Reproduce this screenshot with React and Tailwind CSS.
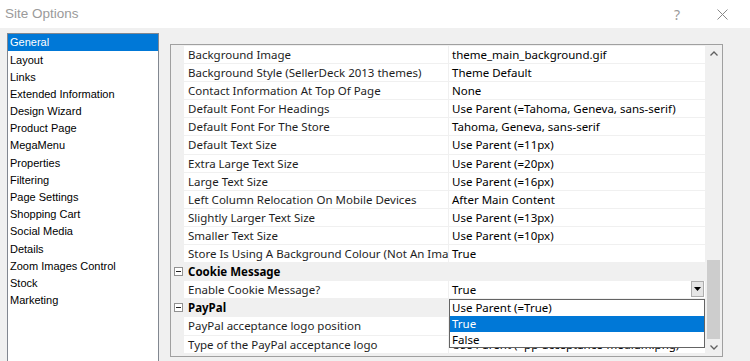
import React from "react";

const pages = [
  "General",
  "Layout",
  "Links",
  "Extended Information",
  "Design Wizard",
  "Product Page",
  "MegaMenu",
  "Properties",
  "Filtering",
  "Page Settings",
  "Shopping Cart",
  "Social Media",
  "Details",
  "Zoom Images Control",
  "Stock",
  "Marketing",
];

const rows = [
  ["Background Image", "theme_main_background.gif"],
  ["Background Style (SellerDeck 2013 themes)", "Theme Default"],
  ["Contact Information At Top Of Page", "None"],
  ["Default Font For Headings", "Use Parent (=Tahoma, Geneva, sans-serif)"],
  ["Default Font For The Store", "Tahoma, Geneva, sans-serif"],
  ["Default Text Size", "Use Parent (=11px)"],
  ["Extra Large Text Size", "Use Parent (=20px)"],
  ["Large Text Size", "Use Parent (=16px)"],
  ["Left Column Relocation On Mobile Devices", "After Main Content"],
  ["Slightly Larger Text Size", "Use Parent (=13px)"],
  ["Smaller Text Size", "Use Parent (=10px)"],
  ["Store Is Using A Background Colour (Not An Image)", "True"],
  { category: "Cookie Message" },
  ["Enable Cookie Message?", "True", "dropdown"],
  { category: "PayPal" },
  ["PayPal acceptance logo position", "Use Parent (=Right)"],
  ["Type of the PayPal acceptance logo", "Use Parent (=pp-acceptance-medium.png)"],
];

function MinusBox() {
  return (
    <svg width="9" height="9" viewBox="0 0 9 9">
      <rect x="0.5" y="0.5" width="8" height="8" fill="#fff" stroke="#919191" />
      <path d="M2 4.5h5" stroke="#222" />
    </svg>
  );
}

function GridRow({ row }) {
  if (row.category) {
    return (
      <div className="flex h-[17.1px] shrink-0 items-center bg-[#f0f0f0]">
        <div className="flex w-[13px] shrink-0 justify-center pl-[1px]">
          <MinusBox />
        </div>
        <div className="pl-[4px] font-bold text-black">{row.category}</div>
      </div>
    );
  }
  const [name, value, kind] = row;
  return (
    <div className="flex h-[17.1px] shrink-0 items-center">
      <div className="w-[13px] shrink-0 self-stretch bg-[#f0f0f0]" />
      <div className="h-full min-w-0 flex-1 overflow-hidden whitespace-nowrap bg-white pl-[4px] leading-[17px] text-[#1e1e1e]">
        {name}
      </div>
      <div className="relative ml-px h-full w-[256px] shrink-0 overflow-hidden whitespace-nowrap bg-white pl-[3px] leading-[17px] text-black">
        {value}
        {kind === "dropdown" && (
          <div className="absolute right-[1px] top-0 flex h-[16px] w-[13px] items-center justify-center border border-[#adadad] bg-[#e5e5e5]">
            <svg width="7" height="4" viewBox="0 0 7 4">
              <path d="M0 0h7L3.5 4z" fill="#000" />
            </svg>
          </div>
        )}
      </div>
    </div>
  );
}

export default function App() {
  return (
    <div className="relative h-[361px] w-[750px] overflow-hidden bg-[#f0f0f0] font-['Liberation_Sans',sans-serif]">
      <div className="flex h-[28px] items-center bg-white pl-[5px]">
        <div className="text-[13.5px] text-[#9a9a9a]">Site Options</div>
        <div className="ml-auto mr-[37px] font-['Noto_Sans',sans-serif] text-[14px] text-[#9a9a9a]">?</div>
        <svg className="mr-[22px]" width="11" height="11" viewBox="0 0 11 11">
          <path d="M0.5 0.5l10 10M10.5 0.5l-10 10" stroke="#888" strokeWidth="1" />
        </svg>
      </div>

      <div className="flex items-start pt-[5px]">
        <div className="ml-[7px] h-[340px] w-[152px] shrink-0 border border-[#828790] bg-white text-[11px]">
          {pages.map((p, i) => (
            <div
              key={p}
              className={
                i === 0
                  ? "flex h-[17.2px] items-center bg-[#0078d7] pl-[2px] text-white"
                  : "flex h-[17.2px] items-center pl-[2px] text-black"
              }
            >
              {p}
            </div>
          ))}
        </div>

        <div className="relative ml-[11px] mt-[11px] flex h-[313px] w-[553px] border border-[#a0a0a0] bg-[#f0f0f0] font-['Noto_Sans',sans-serif] text-[11.5px]">
          <div className="flex flex-1 flex-col gap-px overflow-hidden pt-px">
            {rows.map((r, i) => (
              <GridRow key={i} row={r} />
            ))}
          </div>

          <div className="flex w-[17px] shrink-0 flex-col items-center bg-[#f0f0f0]">
            <div className="flex h-[17px] w-full items-center justify-center">
              <svg width="8" height="5" viewBox="0 0 8 5">
                <path d="M0.5 4.5L4 1l3.5 3.5" fill="none" stroke="#606060" strokeWidth="1.3" />
              </svg>
            </div>
            <div className="flex-1" />
            <div className="h-[79px] w-[13px] bg-[#cdcdcd]" />
            <div className="flex h-[17px] w-full items-center justify-center">
              <svg width="8" height="5" viewBox="0 0 8 5">
                <path d="M0.5 0.5L4 4l3.5-3.5" fill="none" stroke="#606060" strokeWidth="1.3" />
              </svg>
            </div>
          </div>

          <div className="absolute left-[278px] top-[254px] w-[256px] border border-[#646464] bg-white text-black">
            <div className="flex h-[16px] items-center pl-[2px]">Use Parent (=True)</div>
            <div className="flex h-[16px] items-center bg-[#0078d7] pl-[2px] text-white">True</div>
            <div className="flex h-[15px] items-center pl-[2px]">False</div>
          </div>
        </div>
      </div>
    </div>
  );
}
